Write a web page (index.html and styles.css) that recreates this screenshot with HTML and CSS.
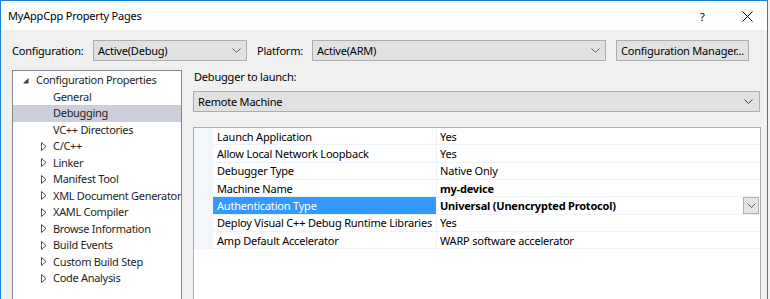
FILE: index.html
```html
<!DOCTYPE html>
<html>
<head>
<meta charset="utf-8">
<link rel="stylesheet" href="styles.css">
</head>
<body>
<div class="window">
  <div class="titlebar">
    <span class="title">MyAppCpp Property Pages</span>
    <span class="help">?</span>
    <span class="close"><svg width="11" height="11" viewBox="0 0 11 11"><path d="M0.5 0.5 L10.5 10.5 M10.5 0.5 L0.5 10.5" stroke="#000" stroke-width="1" fill="none"/></svg></span>
  </div>
  <div class="body">
    <div class="config-row">
      <span class="lbl lbl-config">Configuration:</span>
      <div class="combo combo-config"><span>Active(Debug)</span><svg class="chev" width="9" height="5" viewBox="0 0 9 5"><path d="M0.5 0.5 L4.5 4.5 L8.5 0.5" stroke="#606060" fill="none"/></svg></div>
      <span class="lbl lbl-platform">Platform:</span>
      <div class="combo combo-platform"><span>Active(ARM)</span><svg class="chev" width="9" height="5" viewBox="0 0 9 5"><path d="M0.5 0.5 L4.5 4.5 L8.5 0.5" stroke="#606060" fill="none"/></svg></div>
      <div class="button">Configuration Manager...</div>
    </div>
    <div class="main">
      <div class="tree">
        <div class="tree-row lvl0"><svg class="exp" width="6" height="6" viewBox="0 0 6 6"><path d="M5.5 0 L5.5 5.5 L0 5.5 Z" fill="#3c3c3c"/></svg><span>Configuration Properties</span></div>
        <div class="tree-row lvl1"><span class="noarrow"></span><span>General</span></div>
        <div class="tree-row lvl1 sel"><span class="noarrow"></span><span>Debugging</span></div>
        <div class="tree-row lvl1"><span class="noarrow"></span><span>VC++ Directories</span></div>
        <div class="tree-row lvl1"><svg class="col" width="6" height="9" viewBox="0 0 6 9"><path d="M0.5 0.5 L5 4.5 L0.5 8.5 Z" fill="none" stroke="#505050"/></svg><span>C/C++</span></div>
        <div class="tree-row lvl1"><svg class="col" width="6" height="9" viewBox="0 0 6 9"><path d="M0.5 0.5 L5 4.5 L0.5 8.5 Z" fill="none" stroke="#505050"/></svg><span>Linker</span></div>
        <div class="tree-row lvl1"><svg class="col" width="6" height="9" viewBox="0 0 6 9"><path d="M0.5 0.5 L5 4.5 L0.5 8.5 Z" fill="none" stroke="#505050"/></svg><span>Manifest Tool</span></div>
        <div class="tree-row lvl1"><svg class="col" width="6" height="9" viewBox="0 0 6 9"><path d="M0.5 0.5 L5 4.5 L0.5 8.5 Z" fill="none" stroke="#505050"/></svg><span>XML Document Generator</span></div>
        <div class="tree-row lvl1"><svg class="col" width="6" height="9" viewBox="0 0 6 9"><path d="M0.5 0.5 L5 4.5 L0.5 8.5 Z" fill="none" stroke="#505050"/></svg><span>XAML Compiler</span></div>
        <div class="tree-row lvl1"><svg class="col" width="6" height="9" viewBox="0 0 6 9"><path d="M0.5 0.5 L5 4.5 L0.5 8.5 Z" fill="none" stroke="#505050"/></svg><span>Browse Information</span></div>
        <div class="tree-row lvl1"><svg class="col" width="6" height="9" viewBox="0 0 6 9"><path d="M0.5 0.5 L5 4.5 L0.5 8.5 Z" fill="none" stroke="#505050"/></svg><span>Build Events</span></div>
        <div class="tree-row lvl1"><svg class="col" width="6" height="9" viewBox="0 0 6 9"><path d="M0.5 0.5 L5 4.5 L0.5 8.5 Z" fill="none" stroke="#505050"/></svg><span>Custom Build Step</span></div>
        <div class="tree-row lvl1"><svg class="col" width="6" height="9" viewBox="0 0 6 9"><path d="M0.5 0.5 L5 4.5 L0.5 8.5 Z" fill="none" stroke="#505050"/></svg><span>Code Analysis</span></div>
      </div>
      <div class="pane">
        <div class="pane-label">Debugger to launch:</div>
        <div class="combo combo-wide"><span>Remote Machine</span><svg class="chev" width="9" height="5" viewBox="0 0 9 5"><path d="M0.5 0.5 L4.5 4.5 L8.5 0.5" stroke="#404040" fill="none"/></svg></div>
        <div class="grid">
          <div class="prow"><div class="pm"></div><div class="pn">Launch Application</div><div class="pv">Yes</div></div>
          <div class="prow"><div class="pm"></div><div class="pn">Allow Local Network Loopback</div><div class="pv">Yes</div></div>
          <div class="prow"><div class="pm"></div><div class="pn">Debugger Type</div><div class="pv">Native Only</div></div>
          <div class="prow"><div class="pm"></div><div class="pn">Machine Name</div><div class="pv bold">my-device</div></div>
          <div class="prow"><div class="pm"></div><div class="pn psel">Authentication Type</div><div class="pv bold"><span>Universal (Unencrypted Protocol)</span><span class="dd"><svg width="9" height="5" viewBox="0 0 9 5"><path d="M0.5 0.5 L4.5 4.5 L8.5 0.5" stroke="#606060" fill="none"/></svg></span></div></div>
          <div class="prow"><div class="pm"></div><div class="pn">Deploy Visual C++ Debug Runtime Libraries</div><div class="pv">Yes</div></div>
          <div class="prow"><div class="pm"></div><div class="pn">Amp Default Accelerator</div><div class="pv">WARP software accelerator</div></div>
        </div>
      </div>
    </div>
  </div>
</div>
</body>
</html>
```
FILE: styles.css
```css
html, body {
  margin: 0;
  padding: 0;
  width: 770px;
  height: 299px;
  overflow: hidden;
  background: #f0f0f0;
}
body {
  font-family: "Noto Sans", "Open Sans", sans-serif;
  font-size: 11px;
  letter-spacing: -0.2px;
  color: #000;
}
.window {
  width: 768px;
  height: 299px;
  box-sizing: border-box;
  border: 1px solid #1883d7;
  border-bottom: none;
  background: #f0f0f0;
  display: flex;
  flex-direction: column;
}
.titlebar {
  height: 29px;
  background: #fff;
  display: flex;
  align-items: center;
  flex-shrink: 0;
}
.title {
  margin-left: 7px;
  flex: 1;
  line-height: 16px;
  margin-top: 1px;
}
.help {
  width: 12px;
  margin-right: 30px;
  margin-top: 1px;
}
.close {
  display: flex;
  margin-right: 14px;
  margin-top: 1px;
}
.body {
  flex: 1;
  padding-top: 10px;
  display: flex;
  flex-direction: column;
}
.config-row {
  display: flex;
  align-items: center;
  height: 21px;
  padding-left: 11px;
}
.lbl {
  flex-shrink: 0;
  line-height: 16px;
}
.lbl-config { width: 81px; }
.lbl-platform { width: 55px; margin-left: 10px; }
.combo {
  box-sizing: border-box;
  height: 21px;
  background: #e1e1e1;
  border: 1px solid #adadad;
  display: flex;
  align-items: center;
  justify-content: space-between;
  padding: 0 5px 0 4px;
  flex-shrink: 0;
}
.combo span { line-height: 16px; }
.chev { display: block; flex-shrink: 0; }
.combo-config { width: 154px; }
.combo-platform { width: 294px; }
.button {
  box-sizing: border-box;
  width: 133px;
  height: 21px;
  margin-left: 10px;
  background: #e1e1e1;
  border: 1px solid #adadad;
  display: flex;
  align-items: center;
  justify-content: center;
  line-height: 16px;
  white-space: nowrap;
  flex-shrink: 0;
}
.main {
  flex: 1;
  display: flex;
  margin-top: 9px;
  padding-left: 11px;
}
.tree {
  box-sizing: border-box;
  width: 170px;
  height: 240px;
  background: #fff;
  border: 1px solid #828790;
  padding-top: 1px;
  flex-shrink: 0;
  overflow: hidden;
}
.tree-row {
  height: 16.5px;
  display: flex;
  align-items: center;
  color: #1e1e1e;
  white-space: nowrap;
  letter-spacing: -0.3px;
}
.tree-row svg { flex-shrink: 0; }
.tree-row span { line-height: 16px; }
.tree-row.sel { background: #cccedb; }
.lvl0 { padding-left: 10px; }
.lvl0 .exp { margin-right: 7px; margin-top: 1px; }
.lvl1 { padding-left: 28px; }
.lvl1 .col { margin-right: 6px; }
.noarrow { width: 6px; margin-right: 6px; flex-shrink: 0; }
.pane {
  margin-left: 11px;
  width: 567px;
  display: flex;
  flex-direction: column;
}
.pane-label {
  line-height: 14px;
  height: 14px;
  margin-left: 1px;
}
.combo-wide {
  width: 567px;
  margin-top: 7px;
  padding-right: 6px;
}
.grid {
  box-sizing: border-box;
  margin-top: 15px;
  width: 568px;
  flex: 1;
  background: #fff;
  border: 1px solid #adadad;
  border-bottom: none;
}
.prow {
  display: flex;
  height: 17.33px;
}
.pm {
  width: 19px;
  background: #f3f6fb;
  flex-shrink: 0;
}
.pn {
  box-sizing: border-box;
  width: 224px;
  padding-left: 4px;
  border-right: 1px solid #eef3f9;
  border-bottom: 1px solid #eef3f9;
  display: flex;
  align-items: center;
  white-space: nowrap;
  overflow: hidden;
  flex-shrink: 0;
  color: #000;
}
.psel {
  background: #3399ff;
  color: #fff;
}
.pv {
  flex: 1;
  box-sizing: border-box;
  padding-left: 3px;
  border-bottom: 1px solid #eef3f9;
  display: flex;
  align-items: center;
  justify-content: space-between;
  white-space: nowrap;
}
.bold { font-weight: bold; }
.dd {
  box-sizing: border-box;
  width: 16px;
  height: 17px;
  background: #e5e5e5;
  border: 1px solid #b0b0b0;
  display: flex;
  align-items: center;
  justify-content: center;
  margin-right: 1px;
}
```
